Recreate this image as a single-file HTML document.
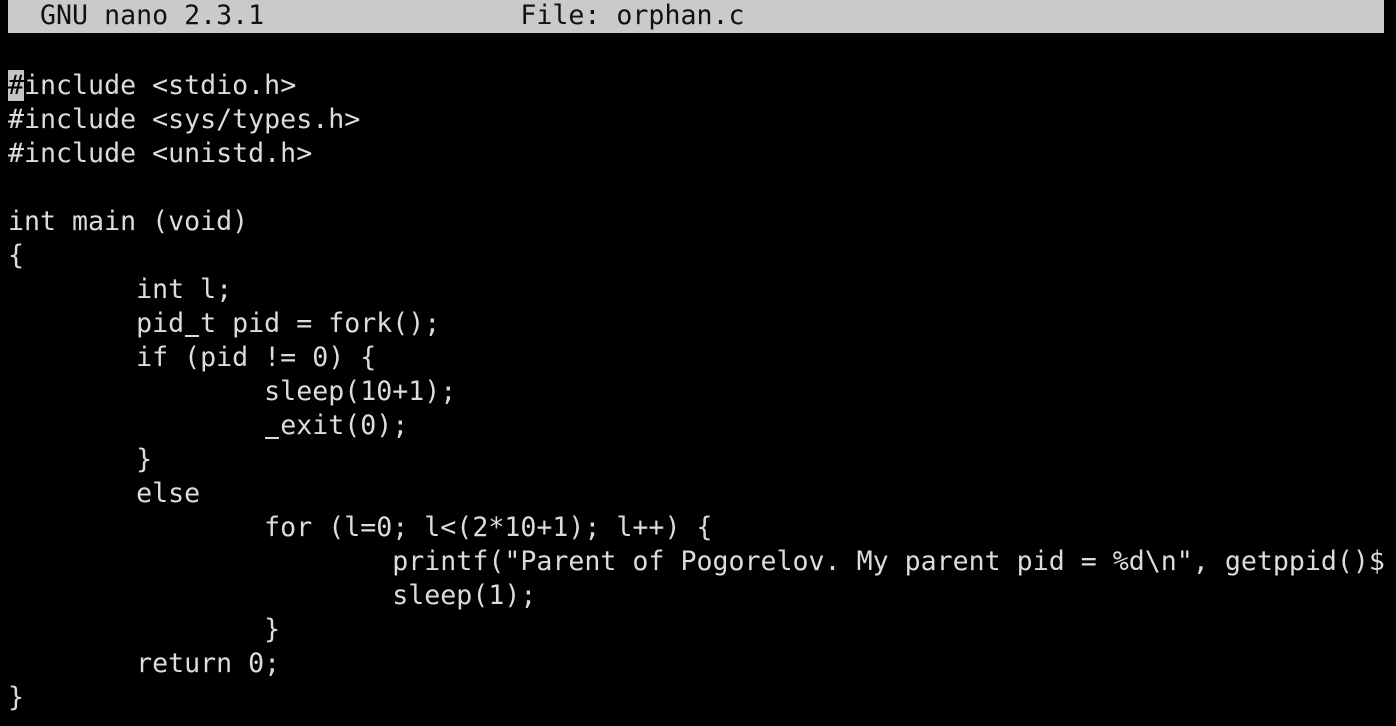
<!DOCTYPE html>
<html><head><meta charset="utf-8"><style>
html,body{margin:0;padding:0;background:#000;width:1396px;height:726px;overflow:hidden}
pre{margin:0;position:absolute;left:8px;top:0;font-family:"DejaVu Sans Mono","Liberation Mono",monospace;font-size:26.6px;line-height:34px;color:#dcdcdc;white-space:pre}
.bar{position:absolute;left:8px;top:0;width:1376px;height:33px;background:#cacaca}
.bar pre{left:0;color:#111;line-height:34px;top:-1px}
.cur{background:#c4c4c4;color:#000}
.u{display:inline-block;position:relative;width:16px;height:34px;vertical-align:top;color:transparent}
.u::after{content:"";position:absolute;left:1px;right:1px;top:28px;height:2px;background:#dcdcdc}
</style></head><body>
<div class="bar"><pre>  GNU nano 2.3.1                File: orphan.c</pre></div>
<pre style="top:69px"><span class="cur">#</span>include &lt;stdio.h&gt;
#include &lt;sys/types.h&gt;
#include &lt;unistd.h&gt;

int main (void)
{
        int l;
        pid<span class="u">_</span>t pid = fork();
        if (pid != 0) {
                sleep(10+1);
                <span class="u">_</span>exit(0);
        }
        else
                for (l=0; l&lt;(2*10+1); l++) {
                        printf("Parent of Pogorelov. My parent pid = %d\n", getppid()$
                        sleep(1);
                }
        return 0;
}</pre>
</body></html>
